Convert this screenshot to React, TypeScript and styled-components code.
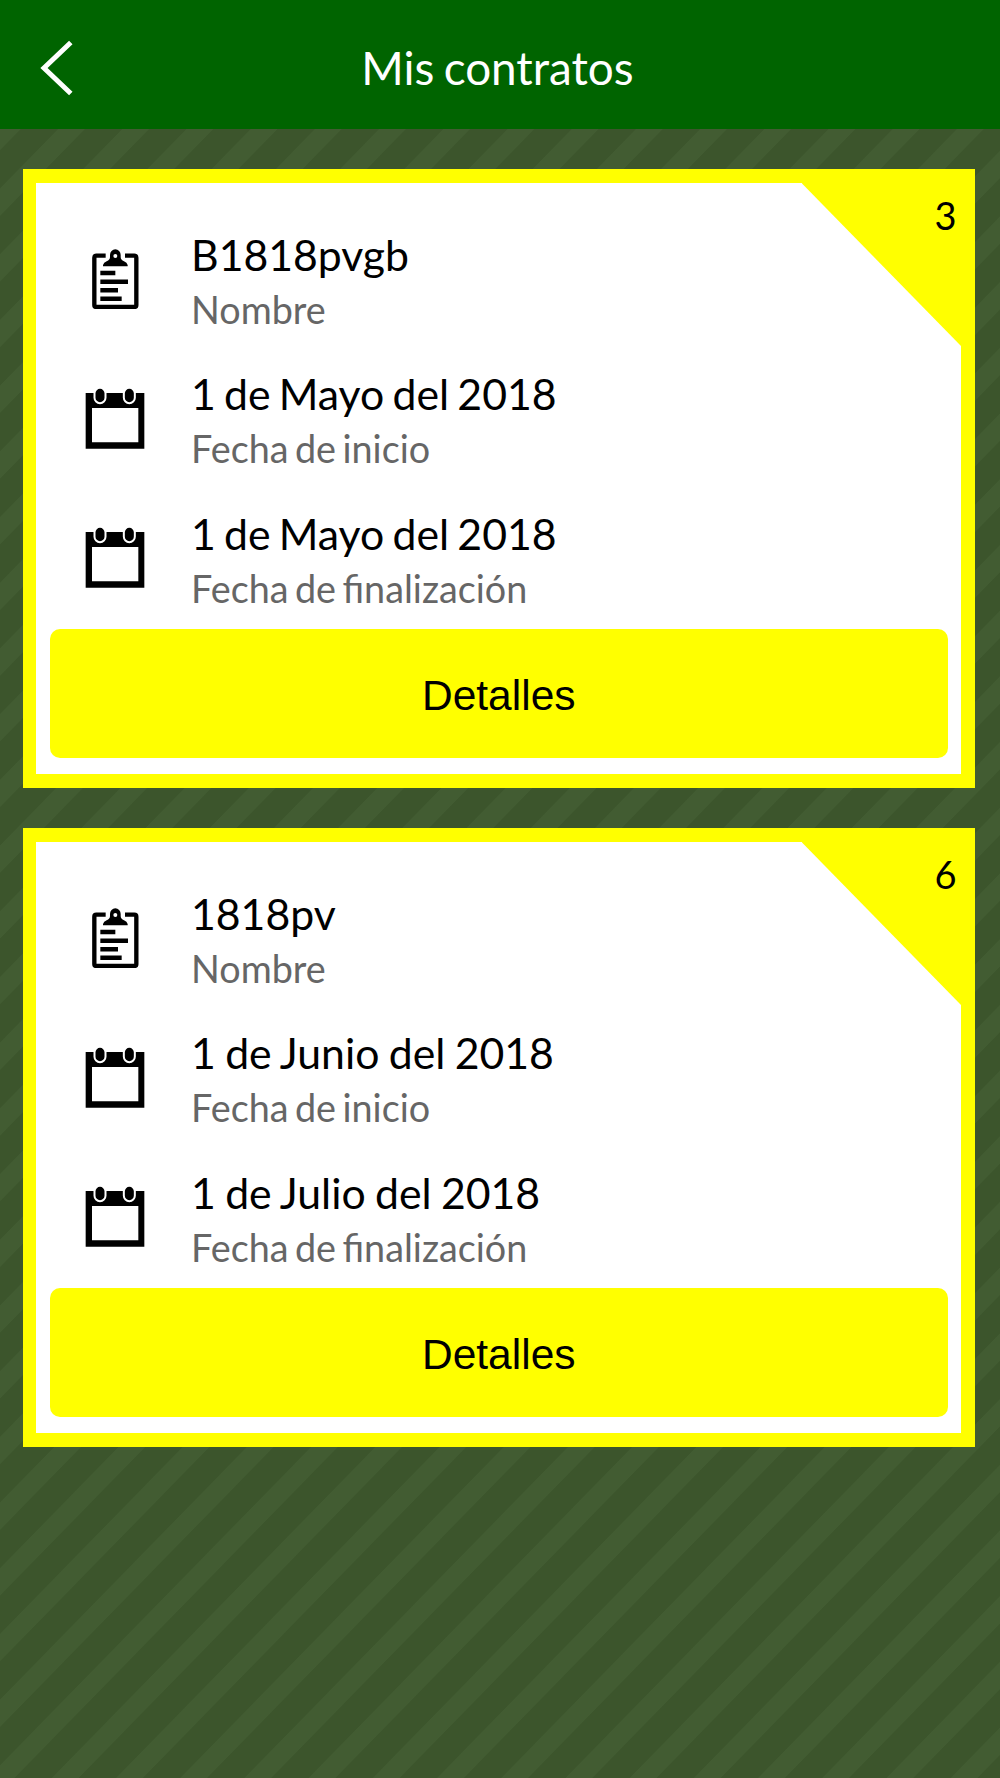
import React from "react";
import styled, { createGlobalStyle } from "styled-components";

const GlobalStyle = createGlobalStyle`
  * { box-sizing: border-box; }
  body { margin: 0; font-family: Lato, "Open Sans", sans-serif; }
`;

const Screen = styled.div`
  width: 1000px;
  height: 1778px;
  overflow: hidden;
  background: repeating-linear-gradient(
    134.34deg,
    #425c32 0px,
    #425c32 12.7px,
    #3c552c 13.5px,
    #3c552c 39.5px,
    #425c32 40.3px,
    #425c32 45.92px
  );
`;

const Header = styled.header`
  display: grid;
  grid-template-columns: 120px 1fr 120px;
  align-items: center;
  height: 129px;
  padding: 7px 5px 0 0;
  background: #006400;
`;

const BackButton = styled.button`
  display: flex;
  padding: 0 0 0 40px;
  border: 0;
  background: none;
`;

const Title = styled.h1`
  margin: 0 0 1px;
  font-size: 45.8px;
  font-weight: 400;
  line-height: 56px;
  word-spacing: -2.4px;
  text-align: center;
  color: #fff;
`;

const List = styled.main`
  display: flex;
  flex-direction: column;
  gap: 40px;
  padding: 40px 25px 0 23px;
`;

const Card = styled.article`
  position: relative;
  height: 619px;
  padding: 43px 13px 0 13.5px;
  border: solid #ff0;
  border-width: 14px 14px 14px 13px;
  background: #fff;
`;

const Corner = styled.div`
  position: absolute;
  top: 0;
  right: 0;
  width: 159.5px;
  height: 163px;
  background: #ff0;
  clip-path: polygon(0 0, 100% 0, 100% 100%);
`;

const Count = styled.span`
  position: absolute;
  top: 9px;
  right: 4.5px;
  font-size: 38px;
  line-height: 46px;
`;

const Row = styled.div`
  display: flex;
  gap: 46px;
  height: 139.5px;
  padding: 0 0 0 35.5px;
`;

const IconBox = styled.div`
  display: flex;
  padding-top: 23px;
`;

const FieldText = styled.div`
  margin-top: -1.5px;
`;

const Value = styled.div<{ $wordGap: number }>`
  font-size: 42.75px;
  line-height: 60px;
  word-spacing: ${(p) => p.$wordGap}px;
  color: #000;
`;

const Label = styled.div`
  font-size: 37.75px;
  line-height: 49px;
  word-spacing: -3.2px;
  color: #666;
`;

const DetailsButton = styled.button`
  display: block;
  width: 100%;
  height: 129px;
  margin: -15.5px 0 0;
  padding: 4px 0 0;
  border: 0;
  border-radius: 10px;
  background: #ff0;
  color: #000;
  font: 400 42.5px "Liberation Sans", Arial, sans-serif;
`;

const ClipboardIcon = () => (
  <svg width="60" height="60" viewBox="75 117 180 180">
    <path
      d="M137 137H109Q103 137 103 143V285Q103 291 109 291H223Q229 291 229 285V143Q229 137 223 137H195"
      fill="none"
      stroke="#000"
      strokeWidth="13"
    />
    <path
      fillRule="evenodd"
      d="M129 169V165Q131 157 140 154Q150 150 150 141V135A16 17 0 0 1 182 135V141Q182 150 192 154Q201 157 203 165V169ZM166 132A6 6 0 1 0 166 144A6 6 0 1 0 166 132Z"
    />
    <path d="M121 189H166M121 215H204M121 240.5H174M121 266H185" stroke="#000" strokeWidth="13.5" />
  </svg>
);

const CalendarIcon = () => (
  <svg width="60" height="60" viewBox="75 537 180 180" overflow="visible">
    <path fillRule="evenodd" d="M77 549H253V716H77ZM96 594V697H235V594Z" />
    <path d="M120 549V563M208 549V563" stroke="#fff" strokeWidth="39" strokeLinecap="round" />
    <path d="M120 550V563M208 550V563" stroke="#000" strokeWidth="27" strokeLinecap="round" />
  </svg>
);

type Contract = { count: number; name: string; start: string; end: string; wordGap: number };

const contracts: Contract[] = [
  { count: 3, name: "B1818pvgb", start: "1 de Mayo del 2018", end: "1 de Mayo del 2018", wordGap: -2.7 },
  { count: 6, name: "1818pv", start: "1 de Junio del 2018", end: "1 de Julio del 2018", wordGap: -1.6 },
];

type FieldProps = { icon: React.ReactNode; value: string; label: string; wordGap?: number };

const Field = ({ icon, value, label, wordGap = 0 }: FieldProps) => (
  <Row>
    <IconBox>{icon}</IconBox>
    <FieldText>
      <Value $wordGap={wordGap}>{value}</Value>
      <Label>{label}</Label>
    </FieldText>
  </Row>
);

export default function App() {
  return (
    <Screen>
      <GlobalStyle />
      <Header>
        <BackButton aria-label="Volver">
          <svg width="34" height="56" viewBox="0 0 34 56" fill="none" stroke="#fff" strokeWidth="5">
            <path d="M30.8 2.5L4 28L30.8 53.5" />
          </svg>
        </BackButton>
        <Title>Mis contratos</Title>
      </Header>
      <List>
        {contracts.map((c) => (
          <Card key={c.name}>
            <Corner />
            <Count>{c.count}</Count>
            <Field icon={<ClipboardIcon />} value={c.name} label="Nombre" />
            <Field icon={<CalendarIcon />} value={c.start} label="Fecha de inicio" wordGap={c.wordGap} />
            <Field icon={<CalendarIcon />} value={c.end} label="Fecha de finalización" wordGap={c.wordGap} />
            <DetailsButton>Detalles</DetailsButton>
          </Card>
        ))}
      </List>
    </Screen>
  );
}
